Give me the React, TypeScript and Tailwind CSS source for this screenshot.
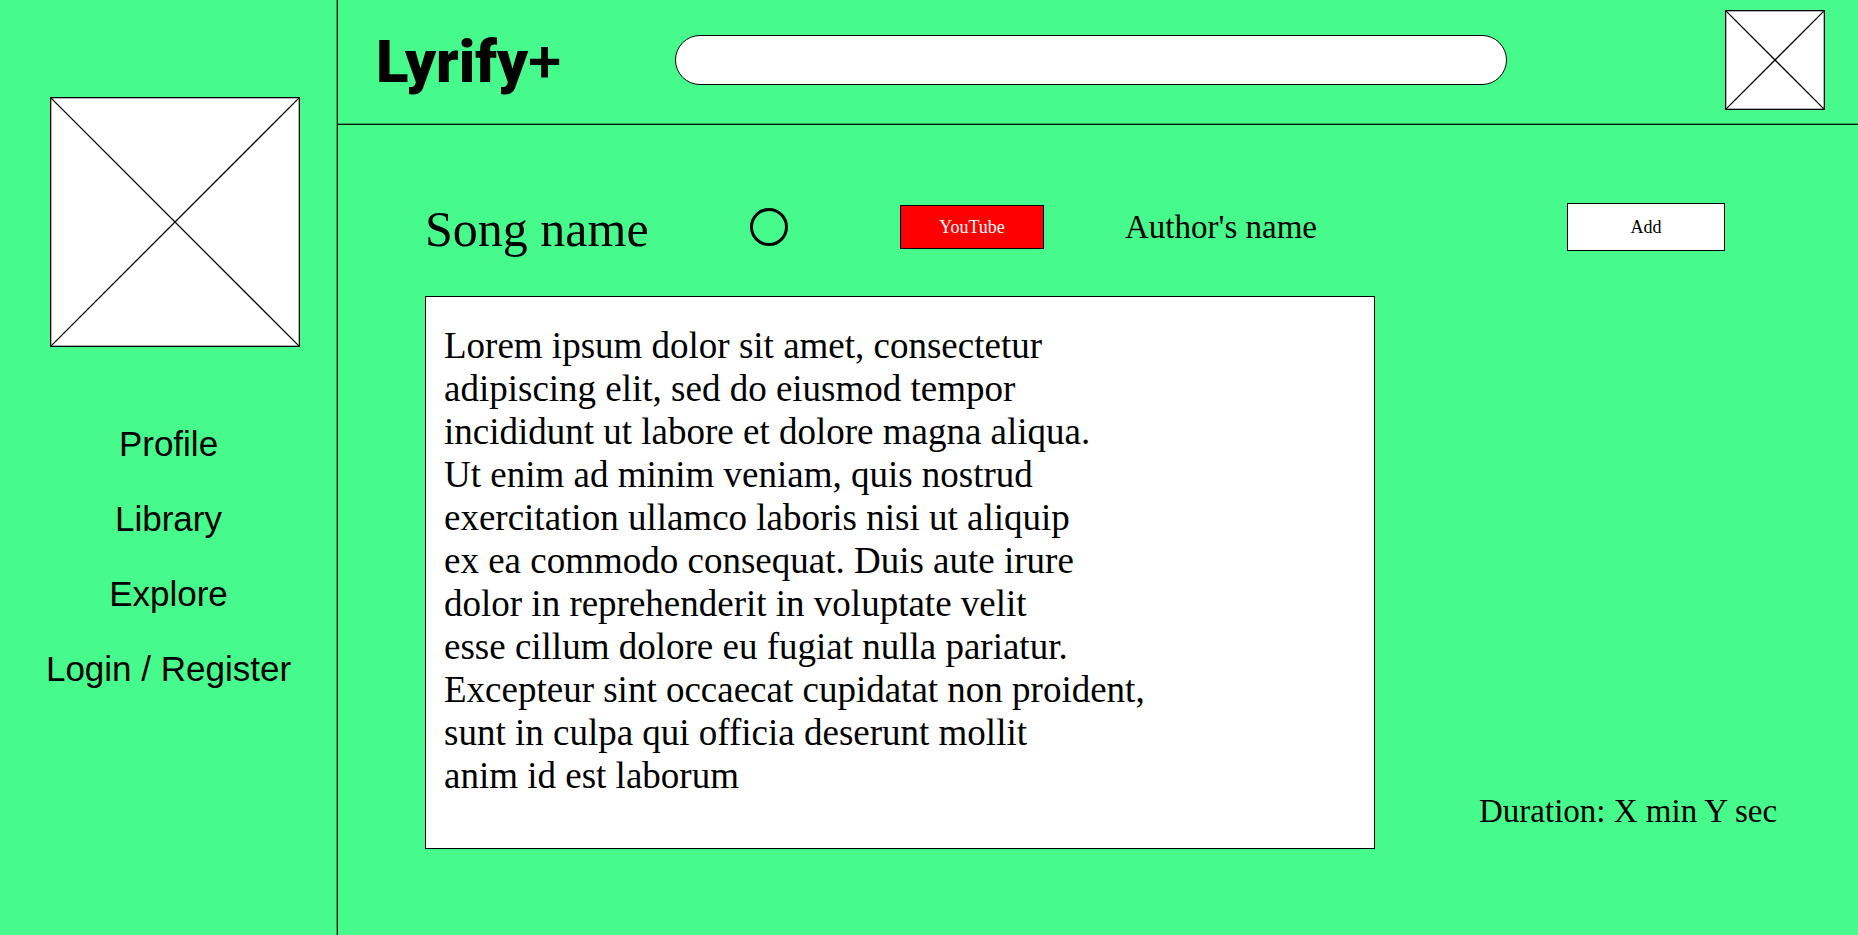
const navItems = ["Profile", "Library", "Explore", "Login / Register"];

const lyrics = [
  "Lorem ipsum dolor sit amet, consectetur",
  "adipiscing elit, sed do eiusmod tempor",
  "incididunt ut labore et dolore magna aliqua.",
  "Ut enim ad minim veniam, quis nostrud",
  "exercitation ullamco laboris nisi ut aliquip",
  "ex ea commodo consequat. Duis aute irure",
  "dolor in reprehenderit in voluptate velit",
  "esse cillum dolore eu fugiat nulla pariatur.",
  "Excepteur sint occaecat cupidatat non proident,",
  "sunt in culpa qui officia deserunt mollit",
  "anim id est laborum",
];

/** Crossed box that stands in for an image. */
function Placeholder({ size, label }: { size: number; label: string }) {
  const end = size - 0.65;
  return (
    <svg
      role="img"
      aria-label={label}
      width={size}
      height={size}
      viewBox={`0 0 ${size} ${size}`}
      className="block shrink-0"
      stroke="#000"
      strokeWidth="1.3"
    >
      <rect x="0.65" y="0.65" width={size - 1.3} height={size - 1.3} fill="#fff" />
      <path d={`M0.65 0.65L${end} ${end}M${end} 0.65L0.65 ${end}`} fill="none" />
    </svg>
  );
}

function Sidebar() {
  return (
    <aside className="w-[338px] shrink-0 border-r border-[#06160c] pt-[97px] shadow-[inset_-1px_0_0_#2fa65c]">
      <div className="pl-[50px]">
        <Placeholder size={250} label="Cover" />
      </div>
      <nav className="mt-[77px] flex flex-col items-center gap-[35px] font-['Liberation_Sans',Arial,sans-serif] text-[35px] leading-[40px]">
        {navItems.map((item) => (
          <a key={item} href="#" className="whitespace-nowrap">
            {item}
          </a>
        ))}
      </nav>
    </aside>
  );
}

function Header() {
  return (
    <header className="flex h-[125px] items-center border-b border-[#06160c] pr-[33px] pb-1 pl-[38px] shadow-[inset_0_-1px_0_#2fa65c]">
      <a
        href="#"
        className="w-[299px] shrink-0 pt-1 font-['Roboto',sans-serif] text-[60px] leading-[64px] font-black"
      >
        Lyrify<span className="font-medium">+</span>
      </a>
      <input
        type="search"
        aria-label="Search"
        className="h-[50px] min-w-0 flex-1 rounded-full border border-black bg-white px-6 text-2xl outline-none"
      />
      <div className="ml-[218px]">
        <Placeholder size={100} label="Avatar" />
      </div>
    </header>
  );
}

export default function App() {
  return (
    <div className="flex min-h-screen bg-[#46fb8b] font-['Liberation_Serif','Times_New_Roman',serif] text-black">
      <Sidebar />
      <div className="flex min-w-0 flex-1 flex-col">
        <Header />
        <main className="pt-[70px] pl-[87px]">
          <div className="flex h-16 items-center pr-[133px]">
            <h1 className="w-[325px] pt-1 text-[50px] leading-[56px] whitespace-nowrap">Song name</h1>
            <button
              type="button"
              aria-label="Play"
              className="size-[38px] shrink-0 rounded-full border-3 border-black"
            />
            <a
              href="#"
              className="ml-28 flex h-11 w-36 shrink-0 items-center justify-center border border-black bg-[#ff0000] text-[18px] leading-5 text-white"
            >
              YouTube
            </a>
            <h2 className="ml-[81px] text-[33px] leading-9 whitespace-nowrap">Author's name</h2>
            <button
              type="button"
              className="ml-auto h-12 w-[158px] shrink-0 border border-black bg-white text-[18px] leading-5"
            >
              Add
            </button>
          </div>
          <div className="mt-[37px] flex items-end">
            <section
              aria-label="Lyrics"
              className="min-w-0 flex-1 border border-black bg-white pt-[27px] pb-[51px] pl-[18px] text-[37px] leading-[43px]"
            >
              {lyrics.map((line) => (
                <p key={line} className="whitespace-nowrap">
                  {line}
                </p>
              ))}
            </section>
            <p className="w-[483px] shrink-0 pb-5 pl-[104px] text-[33px] leading-9 whitespace-nowrap">
              Duration: X min Y sec
            </p>
          </div>
        </main>
      </div>
    </div>
  );
}
